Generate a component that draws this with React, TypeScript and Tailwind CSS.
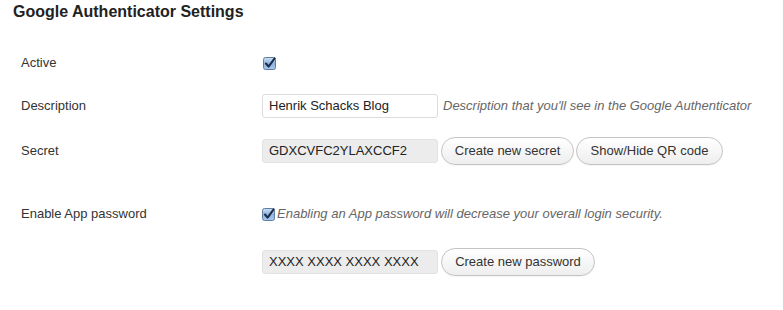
import React from "react";

const Check: React.FC<{ className?: string }> = ({ className }) => (
  <svg width="13" height="13" viewBox="0 0 13 13" className={className}>
    <defs>
      <linearGradient id="cbg" x1="0" y1="0" x2="0" y2="1">
        <stop offset="0" stopColor="#cfe0f3" />
        <stop offset="0.5" stopColor="#8fb3dd" />
        <stop offset="1" stopColor="#a9c8ec" />
      </linearGradient>
    </defs>
    <rect x="0.5" y="0.5" width="12" height="12" rx="2" fill="url(#cbg)" stroke="#5d7fa6" />
    <path d="M3 6.5 L5.6 9.6 L11.6 1.4" fill="none" stroke="#1d2b4a" strokeWidth="2" strokeLinecap="round" strokeLinejoin="round" />
  </svg>
);

const Button: React.FC<{ label: string; width: string }> = ({ label, width }) => (
  <button
    className={`${width} h-[28px] rounded-full border border-[#c4c4c4] bg-gradient-to-b from-white to-[#eeeeee] text-[13px] text-[#333] shadow-[0_1px_0_rgba(0,0,0,0.04)]`}
  >
    {label}
  </button>
);

const Row: React.FC<{ label: string; height: string; children: React.ReactNode }> = ({ label, height, children }) => (
  <div className={`flex items-center ${height}`}>
    <div className="w-[262px] pl-[21px] text-[13px] text-[#333]">{label}</div>
    <div className="flex items-center">{children}</div>
  </div>
);

export default function App() {
  return (
    <div
      className="w-[783px] h-[310px] bg-white text-[#333]"
      style={{ fontFamily: '"Liberation Sans", Arial, sans-serif' }}
    >
      <h2 className="pt-[3px] pl-[13px] text-[16px] leading-[18px] font-bold text-[#222]">
        Google Authenticator Settings
      </h2>

      <div className="mt-[20px]">
        <Row label="Active" height="h-[44px]">
          <Check className="ml-[1px]" />
        </Row>

        <Row label="Description" height="h-[42px]">
          <div className="w-[176px] h-[24px] rounded-[3px] border border-[#dcdcdc] bg-white px-[6px] text-[13px] leading-[22px] text-[#222]">
            Henrik Schacks Blog
          </div>
          <span className="ml-[5px] text-[13px] italic text-[#666]">
            Description that you'll see in the Google Authenticator
          </span>
        </Row>

        <Row label="Secret" height="h-[47px]">
          <div className="w-[176px] h-[24px] rounded-[3px] border border-[#e2e2e2] bg-[#ececec] px-[6px] text-[13px] leading-[22px] text-[#222]">
            GDXCVFC2YLAXCCF2
          </div>
          <div className="ml-[3px] flex items-center gap-[2px]">
            <Button label="Create new secret" width="w-[133px]" />
            <Button label="Show/Hide QR code" width="w-[147px]" />
          </div>
        </Row>

        <div className="h-[22px]" />

        <Row label="Enable App password" height="h-[36px]">
          <Check />
          <span className="ml-[2px] text-[13px] italic text-[#666]">
            Enabling an App password will decrease your overall login security.
          </span>
        </Row>

        <Row label="" height="h-[60px]">
          <div className="w-[176px] h-[24px] rounded-[3px] border border-[#e2e2e2] bg-[#ececec] px-[6px] text-[13px] leading-[22px] text-[#222]">
            XXXX XXXX XXXX XXXX
          </div>
          <div className="ml-[3px]">
            <Button label="Create new password" width="w-[154px]" />
          </div>
        </Row>
      </div>
    </div>
  );
}
